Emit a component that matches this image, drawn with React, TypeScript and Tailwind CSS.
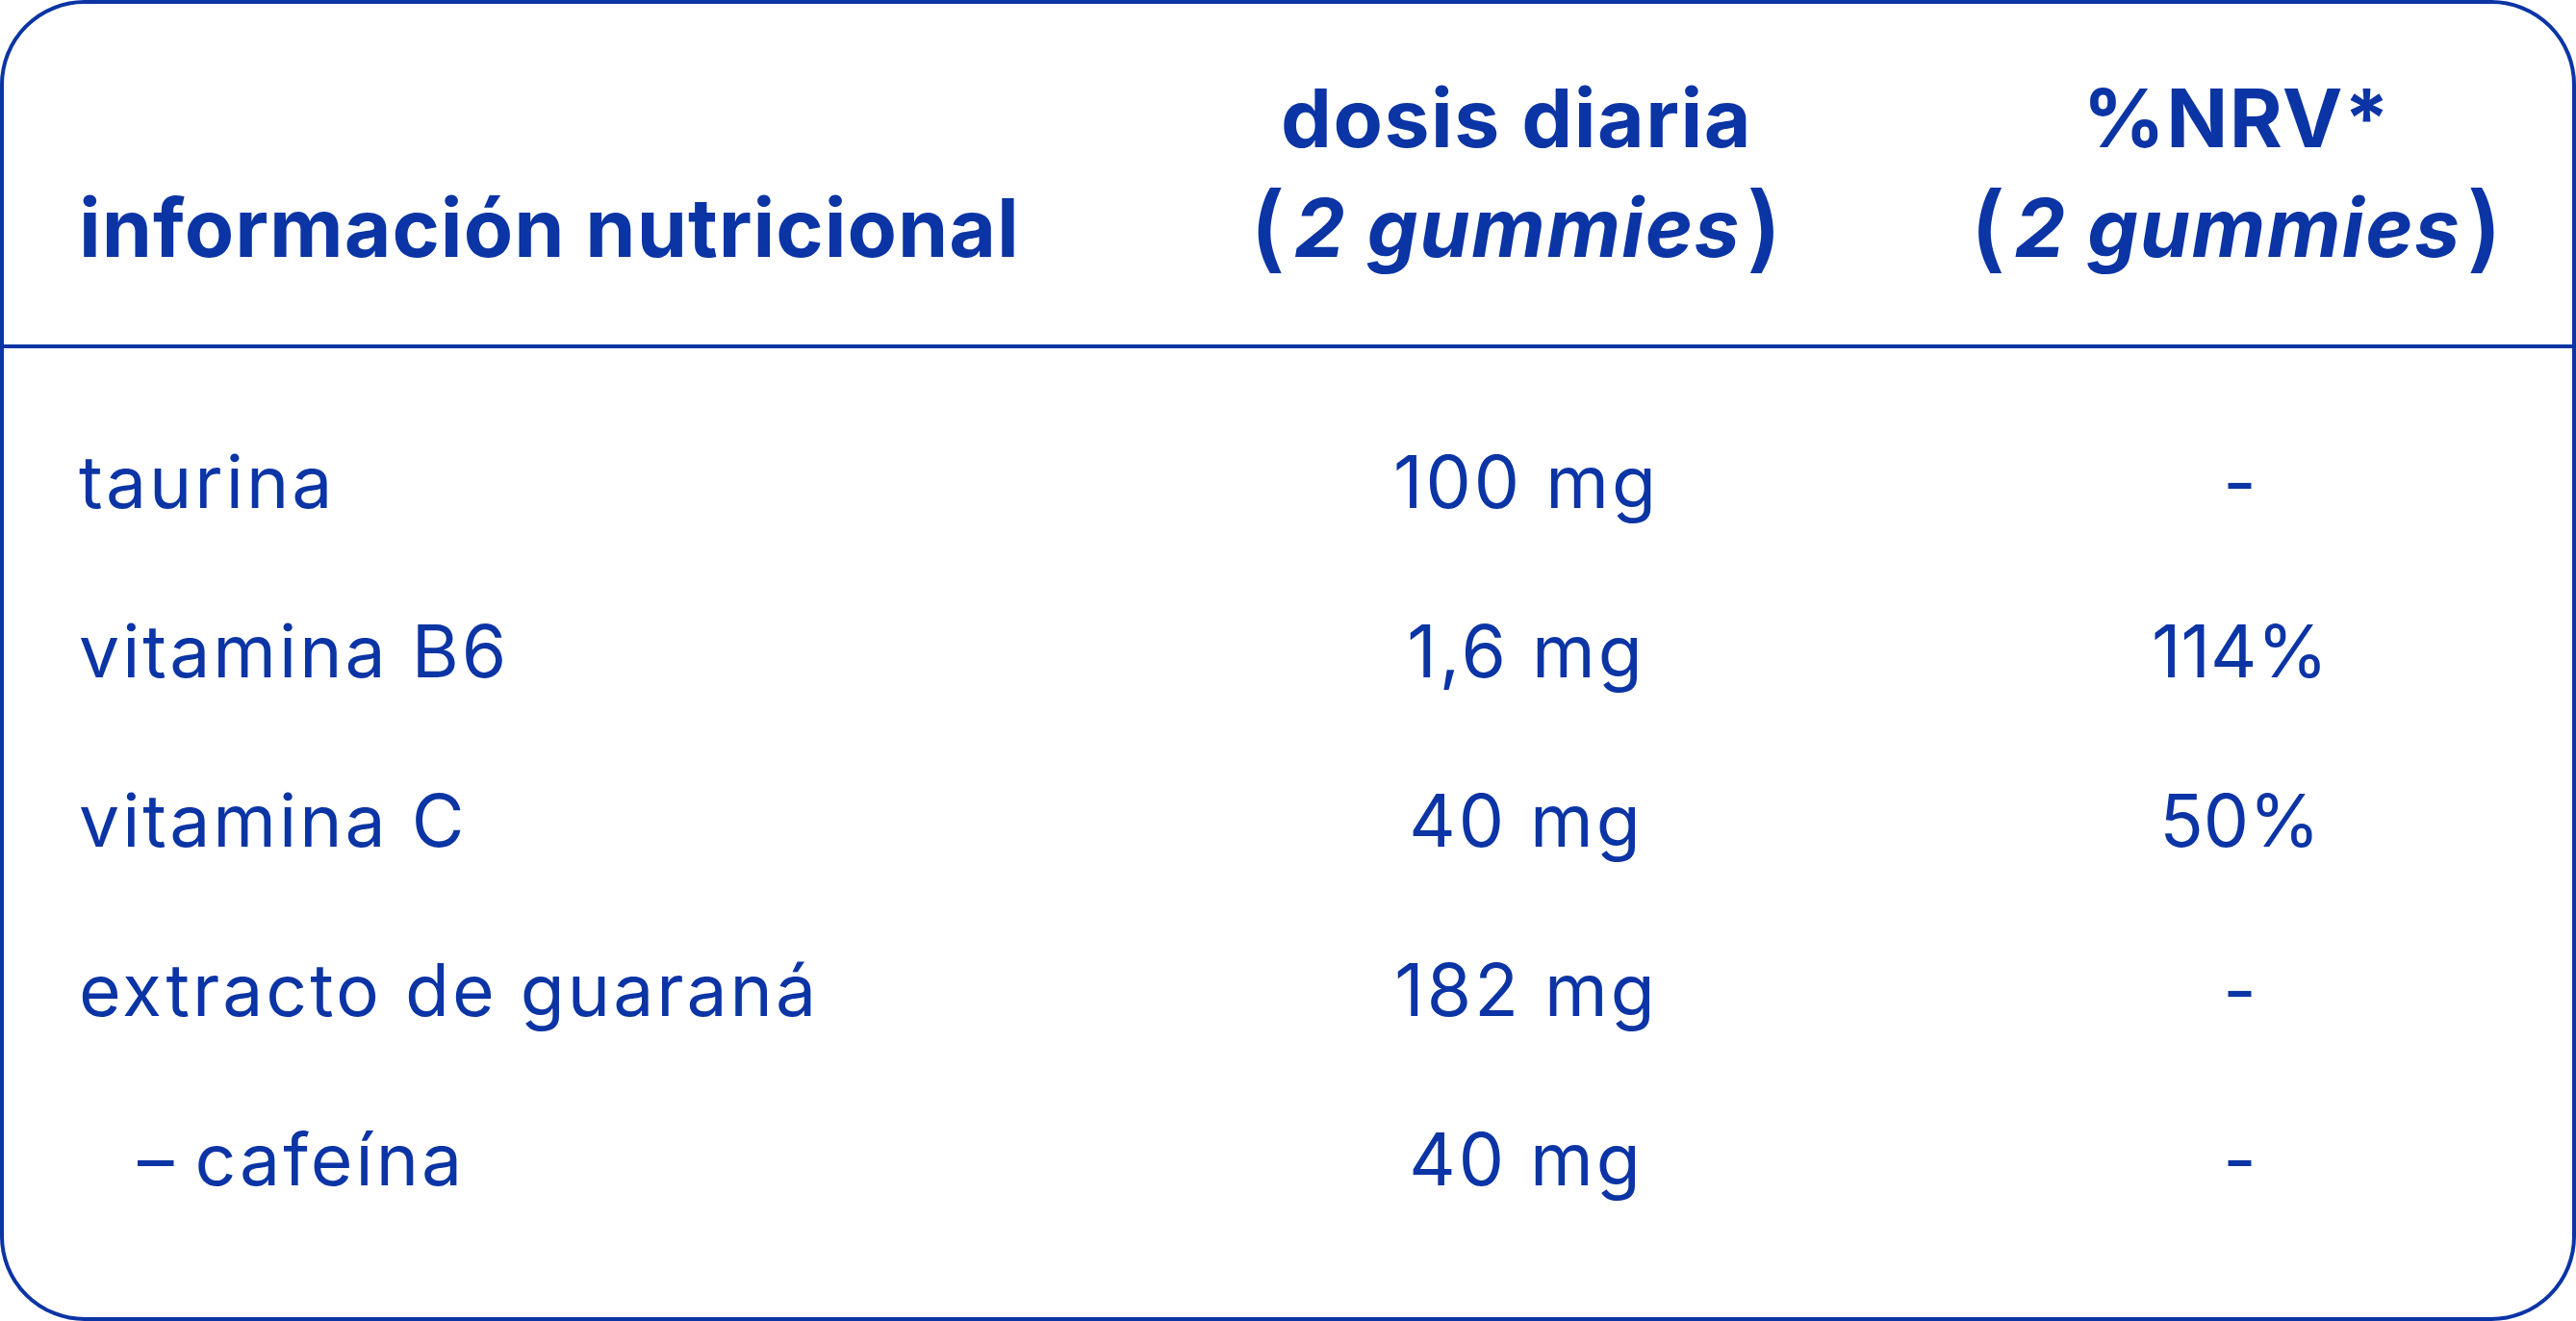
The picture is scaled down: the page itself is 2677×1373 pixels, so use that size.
const rows = [
  { name: 'taurina', dose: '100 mg', nrv: '-' },
  { name: 'vitamina B6', dose: '1,6 mg', nrv: '114%' },
  { name: 'vitamina C', dose: '40 mg', nrv: '50%' },
  { name: 'extracto de guaraná', dose: '182 mg', nrv: '-' },
  { name: 'cafeína', dose: '40 mg', nrv: '-', sub: true },
];

const Gummies = () => (
  <span className="whitespace-nowrap">
    <span className="text-[98px] font-semibold leading-none relative top-[4px] mr-[8px]">(</span>
    <em className="italic">2 gummies</em>
    <span className="text-[98px] font-semibold leading-none relative top-[4px] ml-[6px]">)</span>
  </span>
);

export default function App() {
  return (
    <div className="w-[2677px] h-[1373px] bg-white font-['Inter',sans-serif] text-[#0b34a5]">
      <div className="h-full border-4 border-[#0b34a5] rounded-[88px] flex flex-col overflow-hidden">
        {/* cabecera */}
        <div className="grid grid-cols-[1172px_800px_1fr] items-end border-b-4 border-[#0b34a5] pt-[62px] pb-[64px] text-[84px] leading-[114px] font-bold">
          <div className="pl-[78px] tracking-[1px]">información nutricional</div>
          <div className="text-center tracking-[1.5px]">
            <div>dosis diaria</div>
            <Gummies />
          </div>
          <div className="text-center tracking-[1.5px]">
            <div>%NRV*</div>
            <Gummies />
          </div>
        </div>

        {/* filas */}
        <div className="pt-[51px] flex flex-col text-[75px] leading-[176px]">
          {rows.map((r) => (
            <div key={r.name} className="grid grid-cols-[1172px_800px_1fr]">
              <div className={r.sub ? 'pl-[139px] tracking-[3px]' : 'pl-[78px] tracking-[3px]'}>
                {r.sub ? <span className="mr-[22px] tracking-normal">–</span> : null}
                {r.name}
              </div>
              <div className="text-center pl-[20px] tracking-[3px]">{r.dose}</div>
              <div className="text-center pl-[6px]">{r.nrv}</div>
            </div>
          ))}
        </div>
      </div>
    </div>
  );
}
